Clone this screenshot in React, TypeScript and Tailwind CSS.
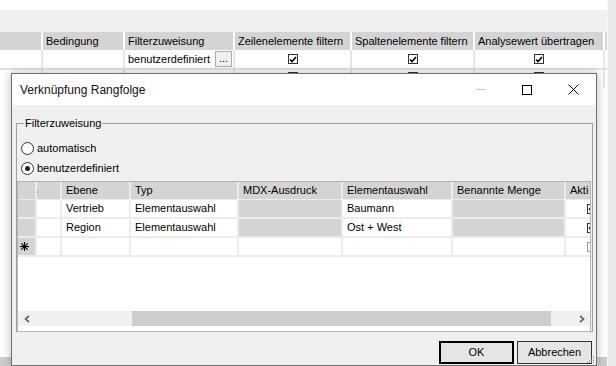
import React from 'react';

const bgCols = [41, 80, 108, 115, 121, 128];

function Check({ on = true }: { on?: boolean }) {
  return (
    <span className="inline-flex h-[10px] w-[10px] items-center justify-center border border-[#333] bg-white">
      {on && (
        <svg width="8" height="7" viewBox="0 0 8 7">
          <path d="M1 3.5 L3 5.5 L7 1" stroke="#000" strokeWidth="1.6" fill="none" />
        </svg>
      )}
    </span>
  );
}

function Radio({ label, checked }: { label: string; checked?: boolean }) {
  return (
    <div className="flex h-[20px] items-center gap-[3px] pl-[4px]">
      <span className="flex h-[13px] w-[13px] items-center justify-center rounded-full border border-[#333] bg-white">
        {checked && <span className="h-[5px] w-[5px] rounded-full bg-[#222]" />}
      </span>
      <span>{label}</span>
    </div>
  );
}

function Chevron({ dir }: { dir: 'l' | 'r' }) {
  return (
    <svg width="6" height="8" viewBox="0 0 6 8">
      <path
        d={dir === 'l' ? 'M5 0.8 L1.5 4 L5 7.2' : 'M1 0.8 L4.5 4 L1 7.2'}
        stroke="#606060"
        strokeWidth="1.7"
        fill="none"
      />
    </svg>
  );
}

function Star() {
  return (
    <svg width="9" height="9" viewBox="0 0 9 9">
      <g stroke="#000" strokeWidth="1.1">
        <line x1="4.5" y1="0" x2="4.5" y2="9" />
        <line x1="0" y1="4.5" x2="9" y2="4.5" />
        <line x1="1.3" y1="1.3" x2="7.7" y2="7.7" />
        <line x1="7.7" y1="1.3" x2="1.3" y2="7.7" />
      </g>
    </svg>
  );
}

// grid column widths inside the dialog
const gw = ['w-[17px]', 'w-[23px]', 'w-[67px]', 'w-[106px]', 'w-[102px]', 'w-[108px]', 'w-[111px]', 'w-[24px]'];
const cell = 'flex h-full shrink-0 items-center overflow-hidden pl-[4px] whitespace-nowrap';

type Row = { ebene: string; typ: string; elem: string; akti: boolean };
const rows: Row[] = [
  { ebene: 'Vertrieb', typ: 'Elementauswahl', elem: 'Baumann', akti: true },
  { ebene: 'Region', typ: 'Elementauswahl', elem: 'Ost + West', akti: true },
];

export default function App() {
  return (
    <div className="relative h-[366px] w-[616px] overflow-hidden bg-white text-[11px] text-black font-['Liberation_Sans',Arial,sans-serif]">
      {/* background application */}
      <div className="flex h-full">
        <div className="flex w-[607px] flex-col">
          <div className="h-[10px] bg-white" />
          <div className="h-[22px] bg-[#f0f0f0]" />
          <div className="flex h-[18px] gap-[2px] bg-white">
            {['', 'Bedingung', 'Filterzuweisung', 'Zeilenelemente filtern', 'Spaltenelemente filtern', 'Analysewert übertragen'].map((t, i) => (
              <div key={i} style={{ width: bgCols[i] }} className="flex shrink-0 items-center bg-[#d4d4d4] pl-[3px] whitespace-nowrap overflow-hidden">
                {t}
              </div>
            ))}
            <div className="flex-1 bg-[#d4d4d4]" />
          </div>
          <div className="flex h-[18px] gap-[2px] bg-[#e6e6e6]">
            <div className="w-[41px] shrink-0 bg-white" />
            <div className="w-[80px] shrink-0 bg-white" />
            <div className="flex w-[108px] shrink-0 items-center justify-between bg-white pl-[3px] pr-[1px]">
              <span>benutzerdefiniert</span>
              <span className="flex h-[16px] w-[17px] items-end justify-center border border-[#adadad] bg-[#f0f0f0] pb-[2px] leading-none">...</span>
            </div>
            {[115, 121, 128].map((w) => (
              <div key={w} style={{ width: w }} className="flex shrink-0 items-center justify-center bg-white">
                <Check />
              </div>
            ))}
            <div className="flex-1 bg-white" />
          </div>
          <div className="h-[2px] bg-[#e2e2e2]" />
          <div className="flex h-[18px] gap-[2px] bg-[#e6e6e6]">
            {bgCols.map((w, i) => (
              <div key={i} style={{ width: w }} className="flex shrink-0 items-start justify-center bg-white pt-[2px]">
                {i > 2 && <Check />}
              </div>
            ))}
            <div className="flex-1 bg-white" />
          </div>
          <div className="flex-1 bg-white" />
          <div className="h-[9px] bg-[#cdcdcd]" />
        </div>
        <div className="w-[9px] border-l border-[#f8f8f8] bg-[#e9e9e9]" />
      </div>

      {/* dialog window */}
      <div className="absolute left-[11px] top-[73px] flex h-[293px] w-[586px] flex-col border border-[#707070] bg-[#f0f0f0] shadow-[0_0_9px_rgba(0,0,0,0.28)]">
        <div className="flex h-[31px] shrink-0 items-center bg-white">
          <span className="flex-1 pl-[8px] text-[12px] text-[#111]">Verknüpfung Rangfolge</span>
          <div className="flex h-full w-[46px] items-center justify-center">
            <span className="h-px w-[10px] bg-[#c6c6c6]" />
          </div>
          <div className="flex h-full w-[46px] items-center justify-center">
            <span className="h-[10px] w-[10px] border border-black" />
          </div>
          <div className="flex h-full w-[46px] items-center justify-center">
            <svg width="11" height="11" viewBox="0 0 11 11">
              <path d="M0.5 0.5 L10.5 10.5 M10.5 0.5 L0.5 10.5" stroke="#000" strokeWidth="1" />
            </svg>
          </div>
        </div>

        <div className="flex flex-1 flex-col pl-[4px] pr-[3px] pt-[11px]">
          <fieldset className="h-[216px] border border-[#a0a0a0]">
            <legend className="ml-[7px] px-[1px] leading-[14px]">Filterzuweisung</legend>
            <div className="h-[8px]" />
            <Radio label="automatisch" />
            <Radio label="benutzerdefiniert" checked />
            <div className="mr-[1px] mt-[3px] flex h-[151px] flex-col border border-[#b4b4b4] bg-white">
              <div className="flex flex-col bg-[#ececec] pb-[2px]">
                <div className="flex h-[17px] gap-[2px]">
                  {['', '', 'Ebene', 'Typ', 'MDX-Ausdruck', 'Elementauswahl', 'Benannte Menge', 'Akti'].map((t, i) => (
                    <div key={i} className={`${cell} ${gw[i]} bg-[#d4d4d4]`}>
                      {i === 1 ? <span className="-ml-[4px] mt-[2px] h-[2px] w-[1px] bg-[#e07a2c]" /> : t}
                    </div>
                  ))}
                </div>
                <div className="mt-[1px] flex flex-col gap-[2px]">
                  {rows.map((r) => (
                    <div key={r.ebene} className="flex h-[17px] gap-[2px]">
                      <div className={`${cell} ${gw[0]} bg-[#d4d4d4]`} />
                      <div className={`${cell} ${gw[1]} bg-white`} />
                      <div className={`${cell} ${gw[2]} bg-white`}>{r.ebene}</div>
                      <div className={`${cell} ${gw[3]} bg-white`}>{r.typ}</div>
                      <div className={`${cell} ${gw[4]} bg-[#d4d4d4]`} />
                      <div className={`${cell} ${gw[5]} bg-white`}>{r.elem}</div>
                      <div className={`${cell} ${gw[6]} bg-[#d4d4d4]`} />
                      <div className={`${cell} ${gw[7]} bg-white !pl-[21px]`}>
                        <span className="shrink-0"><Check on={r.akti} /></span>
                      </div>
                    </div>
                  ))}
                  <div className="flex h-[17px] gap-[2px]">
                    <div className={`${cell} ${gw[0]} bg-[#d4d4d4] !pl-[2px]`}>
                      <Star />
                    </div>
                    {gw.slice(1, 7).map((w, i) => (
                      <div key={i} className={`${cell} ${w} bg-white`} />
                    ))}
                    <div className={`${cell} ${gw[7]} bg-white !pl-[21px]`}>
                      <span className="h-[10px] w-[10px] shrink-0 border border-[#9a9a9a] bg-white" />
                    </div>
                  </div>
                </div>
              </div>
              <div className="flex-1" />
              <div className="flex h-[15px] shrink-0 bg-[#f0f0f0]">
                <div className="flex w-[17px] items-center justify-center">
                  <Chevron dir="l" />
                </div>
                <div className="w-[97px]" />
                <div className="w-[419px] bg-[#cdcdcd]" />
                <div className="flex-1" />
                <div className="flex w-[17px] items-center justify-center">
                  <Chevron dir="r" />
                </div>
              </div>
              <div className="h-[5px] shrink-0" />
            </div>
          </fieldset>

          <div className="mt-[9px] flex justify-end gap-[3px] pr-[1px]">
            <button className="flex h-[23px] w-[75px] items-center justify-center border-2 border-black bg-[#e5e5e5]">OK</button>
            <button className="flex h-[23px] w-[75px] items-center justify-center border border-[#333] bg-[#e5e5e5]">Abbrechen</button>
          </div>
        </div>

        {/* resize grip */}
        <svg className="absolute bottom-[1px] right-[1px]" width="9" height="9" viewBox="0 0 9 9">
          <g fill="#8a8a8a">
            <rect x="7" y="1" width="1" height="1" />
            <rect x="5" y="3" width="1" height="1" />
            <rect x="7" y="3" width="1" height="1" />
            <rect x="3" y="5" width="1" height="1" />
            <rect x="5" y="5" width="1" height="1" />
            <rect x="7" y="5" width="1" height="1" />
            <rect x="1" y="7" width="1" height="1" />
            <rect x="3" y="7" width="1" height="1" />
            <rect x="5" y="7" width="1" height="1" />
            <rect x="7" y="7" width="1" height="1" />
          </g>
        </svg>
      </div>
    </div>
  );
}
